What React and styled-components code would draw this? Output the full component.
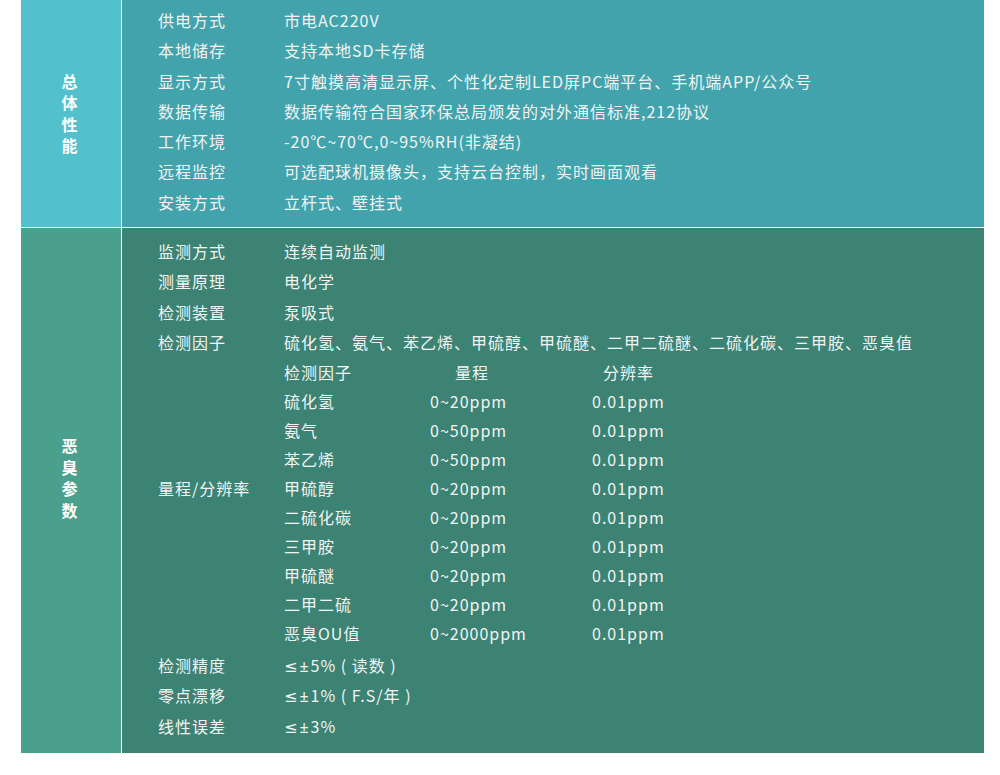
import React from "react";
import styled, { createGlobalStyle } from "styled-components";

const Global = createGlobalStyle`
  html, body { margin: 0; padding: 0; background: #ffffff; }
  body { font-family: "Noto Sans CJK SC", "Noto Sans", sans-serif; }
`;

const Table = styled.div`
  margin-left: 21px;
  width: 963px;
  display: flex;
  flex-direction: column;
  gap: 1px;
  background: #ffffff;
`;

const Section = styled.section`
  display: flex;
  gap: 1px;
  height: ${(p) => p.$h}px;
`;

const Side = styled.div`
  width: 100px;
  flex: none;
  background: ${(p) => p.$bg};
  display: flex;
  align-items: center;
  justify-content: center;
  padding-bottom: ${(p) => p.$shift || 0}px;
  box-sizing: border-box;
`;

const SideLabel = styled.div`
  width: 1em;
  font-size: 16px;
  font-weight: 700;
  line-height: 21.5px;
  color: #ffffff;
  text-align: center;
  word-break: break-all;
  margin-left: -3px;
`;

const Body = styled.div`
  flex: 1;
  background: ${(p) => p.$bg};
  padding: ${(p) => p.$pad};
  padding-left: 36px;
  box-sizing: border-box;
  color: #f1f4f3;
  font-size: 16px;
  letter-spacing: 1px;
`;

const Row = styled.div`
  display: grid;
  grid-template-columns: 126px 1fr;
  height: 30.3px;
  line-height: 30.3px;
  white-space: nowrap;
`;

const SubTable = styled.div`
  display: grid;
  grid-template-columns: 126px 146px 162px 1fr;
  grid-auto-rows: 29px;
  line-height: 29px;
  margin: 1px 0 2px;
  white-space: nowrap;
`;

const Cell = styled.div`
  padding-left: ${(p) => p.$indent || 0}px;
  grid-column: ${(p) => p.$col};
  grid-row: ${(p) => p.$row || "auto"};
`;

const Sym = styled.span`
  font-family: "Noto Sans", "DejaVu Sans", sans-serif;
  letter-spacing: 2px;
`;

const general = [
  ["供电方式", "市电AC220V"],
  ["本地储存", "支持本地SD卡存储"],
  ["显示方式", "7寸触摸高清显示屏、个性化定制LED屏PC端平台、手机端APP/公众号"],
  ["数据传输", "数据传输符合国家环保总局颁发的对外通信标准,212协议"],
  ["工作环境", "-20℃~70℃,0~95%RH(非凝结)"],
  ["远程监控", "可选配球机摄像头，支持云台控制，实时画面观看"],
  ["安装方式", "立杆式、壁挂式"],
];

const odorTop = [
  ["监测方式", "连续自动监测"],
  ["测量原理", "电化学"],
  ["检测装置", "泵吸式"],
  ["检测因子", "硫化氢、氨气、苯乙烯、甲硫醇、甲硫醚、二甲二硫醚、二硫化碳、三甲胺、恶臭值"],
];

const ranges = [
  ["硫化氢", "0~20ppm", "0.01ppm"],
  ["氨气", "0~50ppm", "0.01ppm"],
  ["苯乙烯", "0~50ppm", "0.01ppm"],
  ["甲硫醇", "0~20ppm", "0.01ppm"],
  ["二硫化碳", "0~20ppm", "0.01ppm"],
  ["三甲胺", "0~20ppm", "0.01ppm"],
  ["甲硫醚", "0~20ppm", "0.01ppm"],
  ["二甲二硫", "0~20ppm", "0.01ppm"],
  ["恶臭OU值", "0~2000ppm", "0.01ppm"],
];

const odorBottom = [
  ["检测精度", "5% ( 读数 )"],
  ["零点漂移", "1% ( F.S/年 )"],
  ["线性误差", "3%"],
];

export default function App() {
  return (
    <>
      <Global />
      <Table>
        <Section $h={227}>
          <Side $bg="#53c1cc">
            <SideLabel>总体性能</SideLabel>
          </Side>
          <Body $bg="#43a3ad" $pad="5px 0 10px">
            {general.map(([k, v]) => (
              <Row key={k}>
                <span>{k}</span>
                <span>{v}</span>
              </Row>
            ))}
          </Body>
        </Section>
        <Section $h={525}>
          <Side $bg="#4ba08d" $shift={25}>
            <SideLabel>恶臭参数</SideLabel>
          </Side>
          <Body $bg="#3c8374" $pad="8px 0 12px">
            {odorTop.map(([k, v]) => (
              <Row key={k}>
                <span>{k}</span>
                <span>{v}</span>
              </Row>
            ))}
            <SubTable>
              <Cell $col="2" $row="1">检测因子</Cell>
              <Cell $col="3" $row="1" $indent={25}>量程</Cell>
              <Cell $col="4" $row="1" $indent={11}>分辨率</Cell>
              <Cell $col="1" $row="5">量程/分辨率</Cell>
              {ranges.map(([n, r, s], i) => (
                <React.Fragment key={n}>
                  <Cell $col="2" $row={i + 2}>{n}</Cell>
                  <Cell $col="3" $row={i + 2}>{r}</Cell>
                  <Cell $col="4" $row={i + 2}>{s}</Cell>
                </React.Fragment>
              ))}
            </SubTable>
            {odorBottom.map(([k, v]) => (
              <Row key={k}>
                <span>{k}</span>
                <span>
                  <Sym>≤±</Sym>
                  {v}
                </span>
              </Row>
            ))}
          </Body>
        </Section>
      </Table>
    </>
  );
}
